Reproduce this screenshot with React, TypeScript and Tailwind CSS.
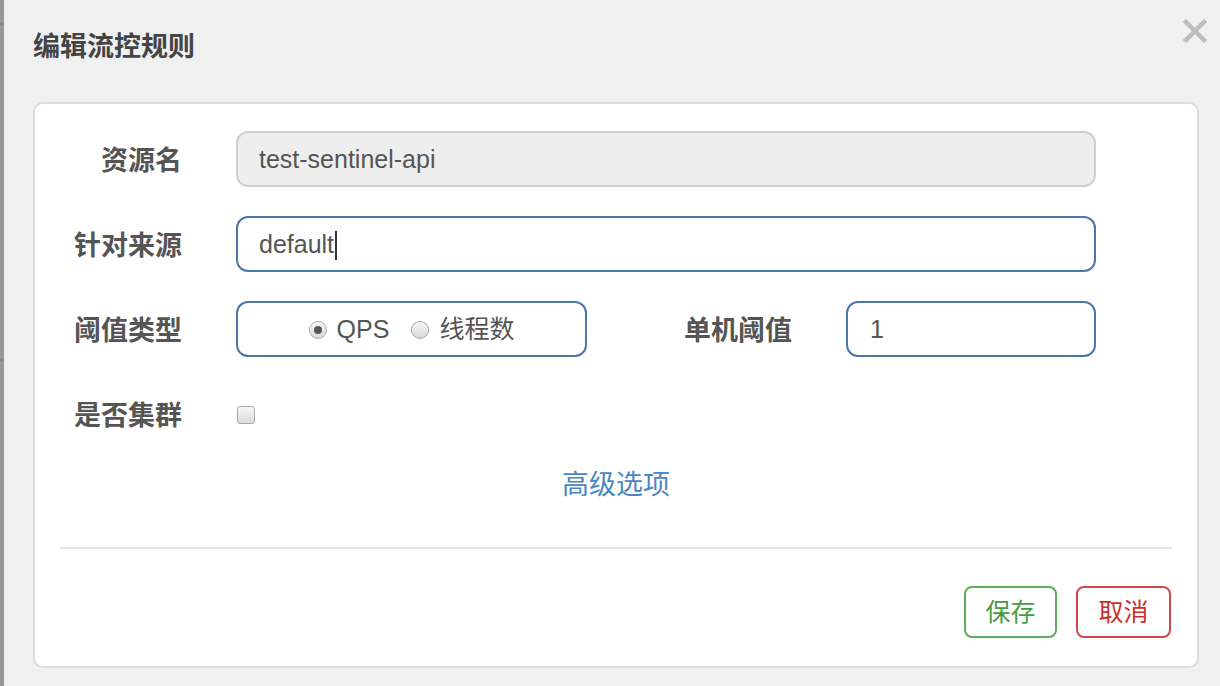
import React from 'react'

const font = 'font-["Liberation_Sans","Noto_Sans_CJK_SC",sans-serif]'

function Label({ text, width }: { text: string; width: string }) {
  return (
    <div className={`${width} shrink-0 pt-[4px] text-right text-[27px] font-bold leading-[38px] text-[#555]`}>
      {text}
    </div>
  )
}

function Radio({ checked }: { checked?: boolean }) {
  return (
    <span className="flex h-[18px] w-[18px] items-center justify-center rounded-full border border-[#a9a9a9] bg-gradient-to-b from-[#f4f4f4] to-[#d9d9d9] shadow-[inset_0_1px_1px_rgba(255,255,255,0.8)]">
      {checked && <span className="h-[8px] w-[8px] rounded-full bg-[#555]" />}
    </span>
  )
}

export default function App() {
  return (
    <div className={`flex h-[686px] w-[1220px] overflow-hidden bg-[#f0f0f0] ${font}`}>
      <div className="flex w-[4px] shrink-0 flex-col bg-[#979797]">
        <div className="mt-[23px] h-[2px] bg-[#8a8a8a]" />
        <div className="mt-[334px] h-[2px] bg-[#8a8a8a]" />
      </div>
      <div className="flex flex-1 flex-col rounded-tl-[6px] bg-[#f0f0f0] pl-[29px] pr-[21px]">
        <div className="flex h-[102px] items-start justify-between">
          <h1 className="pt-[29px] text-[27px] font-bold leading-[36px] text-[#444]">编辑流控规则</h1>
          <svg className="-mr-[8px] mt-[19px]" width="24" height="24" viewBox="0 0 24 24">
            <path d="M3 3 L21 21 M21 3 L3 21" stroke="#bdbdbd" strokeWidth="4.5" strokeLinecap="square" />
          </svg>
        </div>

        <div className="flex h-[566px] flex-col rounded-[10px] border-2 border-[#dcdcdc] bg-white pt-[27px]">
          <div className="flex flex-col gap-[29px]">
            <div className="flex h-[56px] items-center">
              <Label text="资源名" width="w-[147px]" />
              <div className="ml-[54px] flex h-[56px] w-[860px] items-center rounded-[12px] border-2 border-[#cfcfcf] bg-[#eeeeee] px-[21px] pt-[2px] text-[25px] text-[#555]">
                test-sentinel-api
              </div>
            </div>

            <div className="flex h-[56px] items-center">
              <Label text="针对来源" width="w-[147px]" />
              <div className="ml-[54px] flex h-[56px] w-[860px] items-center rounded-[12px] border-2 border-[#4a77a8] bg-white px-[21px] pt-[2px] text-[25px] text-[#555]">
                default
                <span className="ml-[1px] h-[29px] w-[1.5px] bg-[#333]" />
              </div>
            </div>

            <div className="flex h-[56px] items-center">
              <Label text="阈值类型" width="w-[147px]" />
              <div className="ml-[54px] flex h-[56px] w-[351px] items-center justify-center gap-[10px] rounded-[12px] border-2 border-[#4a77a8] bg-white pt-[2px] text-[25px] text-[#555]">
                <Radio checked />
                <span>QPS</span>
                <span className="w-[2px]" />
                <Radio />
                <span>线程数</span>
              </div>
              <Label text="单机阈值" width="w-[205px]" />
              <div className="ml-[54px] flex h-[56px] w-[250px] items-center rounded-[12px] border-2 border-[#4a77a8] bg-white px-[22px] pt-[2px] text-[25px] text-[#555]">
                1
              </div>
            </div>

            <div className="flex h-[56px] items-center">
              <Label text="是否集群" width="w-[147px]" />
              <div className="ml-[55px] mt-[2px] h-[18px] w-[18px] rounded-[3px] border border-[#a9a9a9] bg-gradient-to-b from-[#f6f6f6] to-[#dcdcdc]" />
            </div>
          </div>

          <div className="mt-[24px] text-center text-[27px] leading-[38px] text-[#4a86c0]">高级选项</div>

          <div className="mx-[25px] mt-[43px] h-[2px] bg-[#e5e5e5]" />

          <div className="mt-[37px] flex justify-end gap-[19px] pr-[26px]">
            <button className="h-[52px] w-[93px] rounded-[8px] border-2 border-[#5cae5c] bg-white pt-[2px] text-[25px] text-[#449d44]">
              保存
            </button>
            <button className="h-[52px] w-[95px] rounded-[8px] border-2 border-[#d0494a] bg-white pt-[2px] text-[25px] text-[#c9302c]">
              取消
            </button>
          </div>
        </div>
      </div>
    </div>
  )
}
